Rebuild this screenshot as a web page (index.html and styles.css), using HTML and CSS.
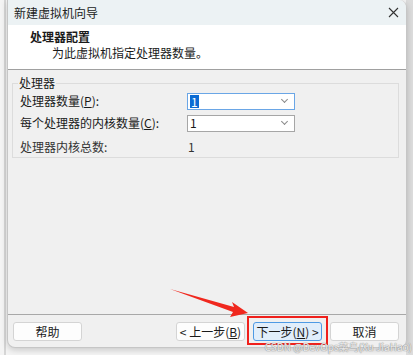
FILE: index.html
```html
<!DOCTYPE html>
<html lang="zh-CN">

<head>
    <meta charset="UTF-8">
    <title>新建虚拟机向导</title>
    <link rel="stylesheet" href="styles.css">
</head>

<body>
    <div class="desktop">
        <div class="wizard">
            <div class="titlebar">
                <span class="title">新建虚拟机向导</span>
                <svg class="close" width="11" height="11" viewBox="0 0 11 11">
                    <path d="M1 1L10 10M10 1L1 10" stroke="#333" stroke-width="1.1" fill="none" />
                </svg>
            </div>
            <div class="header">
                <div class="heading">处理器配置</div>
                <div class="subheading">为此虚拟机指定处理器数量。</div>
            </div>
            <div class="content">
                <fieldset class="group">
                    <legend>处理器</legend>
                    <div class="row">
                        <label>处理器数量(<u>P</u>):</label>
                        <div class="combo focused"><span class="sel">1</span><span class="chev"></span></div>
                    </div>
                    <div class="row">
                        <label>每个处理器的内核数量(<u>C</u>):</label>
                        <div class="combo"><span>1</span><span class="chev"></span></div>
                    </div>
                    <div class="row total">
                        <label>处理器内核总数:</label>
                        <span class="value">1</span>
                    </div>
                </fieldset>
            </div>
            <div class="footer">
                <button class="btn">帮助</button>
                <div class="spacer"></div>
                <button class="btn">&lt; 上一步(<u>B</u>)</button>
                <button class="btn primary">下一步(<u>N</u>) &gt;</button>
                <button class="btn">取消</button>
            </div>
        </div>
        <svg class="arrow" width="90" height="40" viewBox="0 0 90 40">
            <polygon points="0,2 64,20 62,15 78,26 60,30 63,25" fill="#f0281e" />
        </svg>
        <div class="watermark">CSDN @DevOps菜鸟(Xu JiaHao)</div>
    </div>
</body>

</html>
```

FILE: styles.css
```css
body {
    margin: 0;
    background: #fbfbfb;
    font-family: "Noto Sans CJK SC", "Noto Sans", sans-serif;
    font-size: 12px;
    line-height: 16px;
    color: #1a1a1a;
}

.desktop {
    position: relative;
    width: 413px;
    height: 355px;
    overflow: hidden;
    background: linear-gradient(to right, #f4f4f4 0, #f4f4f4 4px, #d6d6d6 4px, #d6d6d6 6px, #f4f4f4 6px, #f4f4f4 406px, #dcdcdc 406px);
}

.wizard {
    margin-left: 7px;
    width: 398px;
    height: 347px;
    border: 1px solid #c6c6c6;
    border-top: none;
    border-radius: 0 8px 8px 8px;
    background: #f0f0f0;
    box-shadow: 0 2px 6px rgba(0, 0, 0, 0.18);
    display: flex;
    flex-direction: column;
    overflow: hidden;
}

.titlebar {
    height: 25px;
    flex: none;
    background: #ecf2f4;
    display: flex;
    align-items: center;
    justify-content: space-between;
    padding: 0 7px 0 6px;
}

.title {
    color: #222;
}

.header {
    height: 45px;
    flex: none;
    background: #fff;
    border-bottom: 1px solid #a0a0a0;
    padding: 3px 0 0 22px;
    box-sizing: border-box;
}

.heading {
    font-weight: bold;
    line-height: 17px;
}

.subheading {
    padding-left: 22px;
}

.content {
    flex: 1;
    padding: 6px 7px 0 4px;
}

.group {
    margin: 0;
    height: 80px;
    border: 1px solid #dcdcdc;
    padding: 0 0 0 7px;
}

.group legend {
    padding: 0 1px;
    margin-left: -2px;
    line-height: 14px;
}

.row {
    display: flex;
    align-items: center;
    height: 22px;
}

.row label {
    width: 167px;
}

.combo {
    width: 100px;
    height: 15px;
    border: 1px solid #a6a6a6;
    background: #fff;
    display: flex;
    align-items: center;
    justify-content: space-between;
    padding: 0 4px 0 2px;
}

.combo.focused {
    border-color: #6aa6e6;
}

.sel {
    background: #0b6bd3;
    color: #fff;
    padding: 0 1px;
    line-height: 13px;
}

.chev {
    width: 4px;
    height: 4px;
    border-right: 1px solid #8a8a8a;
    border-bottom: 1px solid #8a8a8a;
    transform: rotate(45deg);
    margin: 0 3px 3px 0;
}

.total {
    height: 25px;
    color: #333;
}

.value {
    padding-left: 1px;
}

.footer {
    height: 33px;
    flex: none;
    border-top: 1px solid #a8a8a8;
    display: flex;
    align-items: center;
    gap: 8px;
    padding: 0 7px 0 5px;
    box-sizing: border-box;
}

.spacer {
    flex: 1;
}

.btn {
    position: relative;
    width: 69px;
    height: 19px;
    padding: 0;
    border: 1px solid #d4d4d4;
    border-radius: 3px;
    background: #fdfdfd;
    font-family: inherit;
    font-size: 12px;
    color: #1a1a1a;
}

.btn.primary {
    background: #e1eefb;
    border-color: #4e9ae4;
}

.btn.primary::after {
    content: "";
    position: absolute;
    left: -7px;
    right: -7px;
    top: -7px;
    bottom: -5px;
    border: 2px solid #f0201c;
}

.arrow {
    position: absolute;
    left: 170px;
    top: 287px;
}

.watermark {
    position: absolute;
    right: 1px;
    bottom: 3px;
    font-size: 10px;
    line-height: 10px;
    color: rgba(255, 255, 255, 0.85);
    text-shadow: 0 0 1px #888, 0 0 1px #888;
}
```
